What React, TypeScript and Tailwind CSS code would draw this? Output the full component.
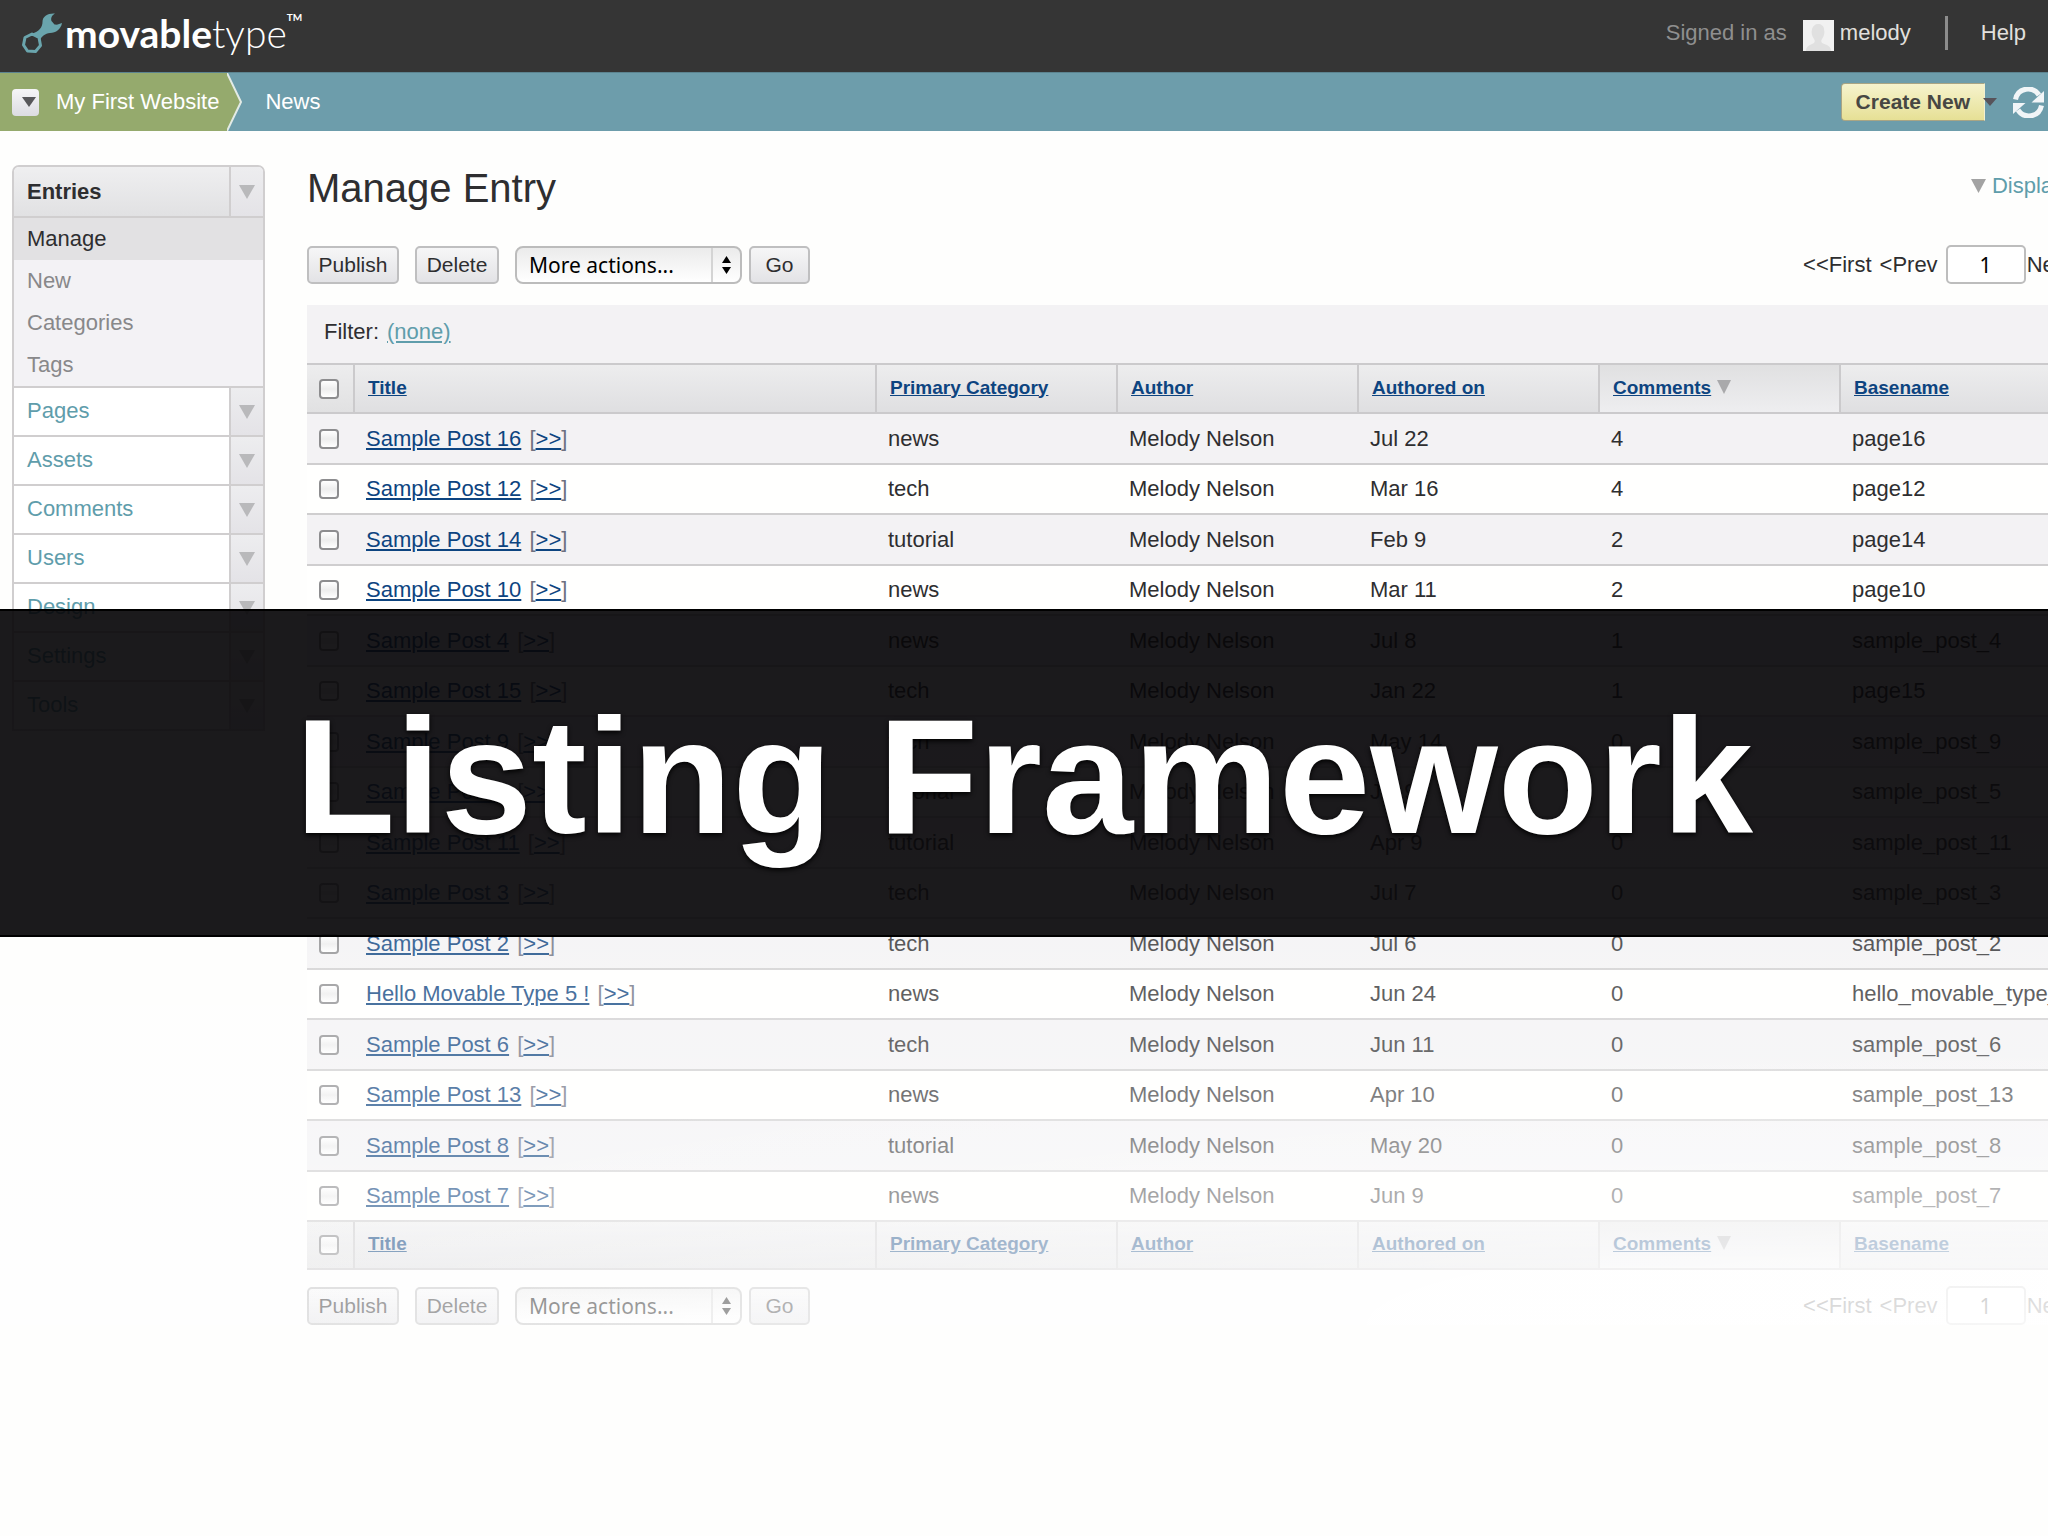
import clsx from 'clsx'

type Post = {
  title: string
  category: string
  date: string
  comments: number
  basename: string
}

const posts: Post[] = [
  { title: 'Sample Post 16', category: 'news', date: 'Jul 22', comments: 4, basename: 'page16' },
  { title: 'Sample Post 12', category: 'tech', date: 'Mar 16', comments: 4, basename: 'page12' },
  { title: 'Sample Post 14', category: 'tutorial', date: 'Feb 9', comments: 2, basename: 'page14' },
  { title: 'Sample Post 10', category: 'news', date: 'Mar 11', comments: 2, basename: 'page10' },
  { title: 'Sample Post 4', category: 'news', date: 'Jul 8', comments: 1, basename: 'sample_post_4' },
  { title: 'Sample Post 15', category: 'tech', date: 'Jan 22', comments: 1, basename: 'page15' },
  { title: 'Sample Post 9', category: 'tech', date: 'May 14', comments: 0, basename: 'sample_post_9' },
  { title: 'Sample Post 5', category: 'tutorial', date: 'Jul 9', comments: 0, basename: 'sample_post_5' },
  { title: 'Sample Post 11', category: 'tutorial', date: 'Apr 9', comments: 0, basename: 'sample_post_11' },
  { title: 'Sample Post 3', category: 'tech', date: 'Jul 7', comments: 0, basename: 'sample_post_3' },
  { title: 'Sample Post 2', category: 'tech', date: 'Jul 6', comments: 0, basename: 'sample_post_2' },
  { title: 'Hello Movable Type 5 !', category: 'news', date: 'Jun 24', comments: 0, basename: 'hello_movable_type_5' },
  { title: 'Sample Post 6', category: 'tech', date: 'Jun 11', comments: 0, basename: 'sample_post_6' },
  { title: 'Sample Post 13', category: 'news', date: 'Apr 10', comments: 0, basename: 'sample_post_13' },
  { title: 'Sample Post 8', category: 'tutorial', date: 'May 20', comments: 0, basename: 'sample_post_8' },
  { title: 'Sample Post 7', category: 'news', date: 'Jun 9', comments: 0, basename: 'sample_post_7' },
]

const columns = ['Title', 'Primary Category', 'Author', 'Authored on', 'Comments', 'Basename']
const entryLinks = ['Manage', 'New', 'Categories', 'Tags']
const menus = ['Pages', 'Assets', 'Comments', 'Users', 'Design', 'Settings', 'Tools']

export default function App() {
  return (
    <div className="relative min-h-screen overflow-hidden bg-[#fefefd] font-['Liberation_Sans',Arial,sans-serif] text-[22px] leading-7 text-[#2e2e30]">
      <TopBar />
      <Breadcrumbs />
      <div className="relative flex pl-3 pt-[34px]">
        <Sidebar />
        <main className="ml-[42px] -mr-28 min-w-0 flex-1">
          <div className="flex h-[46px] items-center justify-between pr-3.5">
            <h1 className="text-[40px] leading-[46px]">Manage Entry</h1>
            <a href="#display" className="flex items-center gap-1.5 pb-1 text-[#5f9dab]">
              <Triangle className="h-3.5 w-[15px] text-[#a3a3a3]" />
              Display Options
            </a>
          </div>
          <div className="mt-[34px]">
            <ActionBar id="top" />
          </div>
          <div className="mt-[21px] flex h-[58px] items-center gap-2 bg-[#f3f2f4] pb-1 pl-[17px]">
            Filter: <a href="#filter" className="text-[#5f9dab] underline">(none)</a>
          </div>
          <Listing />
          <div className="mt-4">
            <ActionBar id="bottom" />
          </div>
        </main>
        <div className="pointer-events-none absolute inset-x-0 bottom-0 h-[640px] bg-linear-to-b from-white/0 to-white/50" />
        <div className="pointer-events-none absolute inset-x-0 bottom-0 h-[640px] bg-[radial-gradient(ellipse_100%_45%_at_100%_100%,rgba(255,255,255,0.75),rgba(255,255,255,0))]" />
      </div>
      <div className="absolute inset-x-0 top-[609px] flex h-[328px] items-center justify-center border-y-2 border-black bg-[rgba(8,6,9,0.92)] pt-2">
        <h2 className="whitespace-nowrap text-[164px] font-bold leading-none text-white [text-shadow:0_2px_5px_#000]">
          Listing Framework
        </h2>
      </div>
    </div>
  )
}

function TopBar() {
  return (
    <header className="flex h-[72px] items-center bg-[#353535] px-[22px] pb-1.5">
      <a href="#home" className="flex items-center text-white">
        <Wrench />
        <span className="flex items-start pl-[3px] font-['Lato',sans-serif] text-[39px] leading-[44px]">
          <span className="font-bold">movable</span>
          <span className="font-light">type</span>
          <span className="text-[10px] font-bold leading-3">TM</span>
        </span>
      </a>
      <div className="ml-auto flex h-[34px] items-center text-[#e2e0dd]">
        <span className="text-[#8f8f8f]">Signed in as</span>
        <svg viewBox="0 0 31 31" className="ml-4 mr-1.5 mt-1 size-[31px]" aria-hidden="true">
          <rect width="31" height="31" fill="#f1f1f1" />
          <path d="M3 31c0-5 4-6 8-8 1-1 1-3 0-4-2-3-3-6-2-10 1-3 3-5 6-5s6 2 6 5c1 4 0 7-2 10-1 1-1 3 0 4 5 2 9 3 9 8z" fill="#e0e0e0" />
        </svg>
        <a href="#profile">melody</a>
        <span className="ml-[34px] mr-[33px] h-[34px] w-[3px] bg-[#8c8c8c]" />
        <a href="#help">Help</a>
      </div>
    </header>
  )
}

function Breadcrumbs() {
  return (
    <nav className="flex h-[59px] items-center border-t border-[#5c8490] bg-[#6d9dab] text-white">
      <div className="flex h-full items-center bg-[#95aa6d] pl-3">
        <button aria-label="Choose site" className="flex size-[27px] items-center justify-center rounded-[4px] bg-linear-to-b from-[#f5f5f7] to-[#dcdce2] pl-1.5">
          <Triangle className="h-2.5 w-3.5 text-[#57575a]" />
        </button>
        <a href="#site" className="ml-[17px] mr-2">My First Website</a>
      </div>
      <svg viewBox="0 0 16 58" className="h-full w-4" aria-hidden="true">
        <path d="M0 0L14 29 0 58z" fill="#95aa6d" />
        <path d="M0 0L14 29 0 58" fill="none" stroke="#e3ebe6" strokeWidth="2" />
      </svg>
      <a href="#news" className="ml-[22px]">News</a>
      <button className="ml-auto h-[38px] rounded-l-[4px] border border-[#a9a584] border-r-[#f3f0d0] bg-linear-to-b from-[#f6f3cd] to-[#e6e095] px-3.5 text-[21px] font-bold text-[#474743]">
        Create New
      </button>
      <Triangle className="-ml-0.5 h-2 w-3.5 text-[#57535a]" />
      <button aria-label="Rebuild" className="ml-4 mr-1">
        <Refresh />
      </button>
    </nav>
  )
}

function Sidebar() {
  return (
    <aside className="w-[253px] shrink-0 self-start overflow-hidden rounded-t-[7px] border-2 border-[#d0cecf] bg-white">
      <div className="flex h-[51px] border-b-2 border-[#d0cecf] bg-linear-to-b from-[#efeff0] to-[#e1e1e3]">
        <a href="#entries" className="flex flex-1 items-center pl-[13px] pt-px font-bold">Entries</a>
        <MenuToggle name="Entries" />
      </div>
      <ul className="bg-[#f3f2f5] text-[#88888a]">
        {entryLinks.map((name, i) => (
          <li key={name}>
            <a
              href="#entries"
              className={clsx('flex h-[42px] items-center pl-[13px]', i === 0 && 'bg-[#e2e1e3] text-[#2e2e30]')}
            >
              {name}
            </a>
          </li>
        ))}
      </ul>
      {menus.map(name => (
        <div key={name} className="flex h-[49px] border-t-2 border-[#d0cecf]">
          <a href="#menu" className="flex flex-1 items-center pb-0.5 pl-[13px] text-[#5f9dab]">{name}</a>
          <MenuToggle name={name} />
        </div>
      ))}
    </aside>
  )
}

function MenuToggle({ name }: { name: string }) {
  return (
    <button
      aria-label={`Toggle ${name}`}
      className="flex w-[34px] items-center justify-center border-l-2 border-[#d0cecf] bg-linear-to-b from-[#ededef] to-[#e4e3e7]"
    >
      <Triangle className="h-3.5 w-4 text-[#b9b9bb]" />
    </button>
  )
}

function ActionBar({ id }: { id: string }) {
  const button = 'h-[38px] rounded-[5px] border-2 border-[#bfbfc0] bg-linear-to-b from-[#f6f6f7] to-[#e3e3e6] text-[21px]'
  return (
    <div className="flex h-[39px] items-center">
      <button className={clsx(button, 'w-[92px]')}>Publish</button>
      <button className={clsx(button, 'ml-4 w-[84px]')}>Delete</button>
      <div className="relative ml-4">
        <select
          aria-label="More actions"
          className="block h-[38px] w-[227px] appearance-none rounded-[8px] border-2 border-[#bcbcbc] bg-linear-to-b from-[#ebebeb] to-white pl-3 font-['Noto_Sans',sans-serif] text-[21px] leading-7 text-black"
        >
          <option>More actions...</option>
        </select>
        <div className="pointer-events-none absolute inset-y-0.5 right-0.5 flex w-[29px] flex-col items-center justify-center gap-1 border-l-2 border-[#d4d4d4]">
          <Triangle className="h-[7px] w-[9px] rotate-180 text-black" />
          <Triangle className="h-[7px] w-[9px] text-black" />
        </div>
      </div>
      <button className={clsx(button, 'ml-[7px] w-[61px]')}>Go</button>
      <div className="ml-auto flex items-center whitespace-nowrap">
        <a href="#first">&lt;&lt;First</a>
        <a href="#prev" className="ml-2">&lt;Prev</a>
        <input
          type="text"
          aria-label="Page number"
          id={`page-${id}`}
          defaultValue="1"
          className="ml-2 mr-px h-[39px] w-20 rounded-[5px] border-2 border-[#bdbdbd] bg-white text-center font-['Noto_Sans',sans-serif] text-[21px] text-black"
        />
        <a href="#next">Next&gt;</a>
        <a href="#last" className="ml-2">Last&gt;&gt;</a>
      </div>
    </div>
  )
}

function Listing() {
  return (
    <table className="w-full table-fixed border-separate border-spacing-0 text-left">
      <colgroup>
        <col className="w-[46px]" />
        <col />
        <col className="w-[241px]" />
        <col className="w-[241px]" />
        <col className="w-[241px]" />
        <col className="w-[241px]" />
        <col className="w-[321px]" />
      </colgroup>
      <thead>
        <HeadingRow top />
      </thead>
      <tbody>
        {posts.map(post => (
          <tr
            key={post.basename}
            className="odd:h-[51px] odd:bg-[#f3f2f4] even:h-[50px] even:bg-[#fffffe] [&>td]:border-b-2 [&>td]:border-[#cfcecf] [&>td]:pl-[13px]"
          >
            <td className="pl-3!"><Checkbox label={`Select ${post.title}`} /></td>
            <td className="text-[#6d7080]">
              <a href="#edit" className="mr-0.5 text-[#0d4480] underline">{post.title}</a>{' '}
              [<a href="#view" className="text-[#0d4480] underline">&gt;&gt;</a>]
            </td>
            <td>{post.category}</td>
            <td>Melody Nelson</td>
            <td>{post.date}</td>
            <td>{post.comments}</td>
            <td>{post.basename}</td>
          </tr>
        ))}
      </tbody>
      <tfoot>
        <HeadingRow />
      </tfoot>
    </table>
  )
}

function HeadingRow({ top = false }: { top?: boolean }) {
  return (
    <tr className={clsx('[&>th]:border-b-2 [&>th]:border-[#cbcacc]', top ? 'h-[51px] [&>th]:border-t-2' : 'h-12')}>
      <th className="bg-linear-to-b from-[#ededee] to-[#e1e1e2] pl-3">
        <Checkbox label="Select all" />
      </th>
      {columns.map(name => (
        <th
          key={name}
          className={clsx(
            'border-l-2 bg-linear-to-b pb-0.5 pl-[13px] text-[19px] leading-6',
            name === 'Comments' ? 'from-[#e0e0e1] to-[#eeeef0]' : 'from-[#ededee] to-[#dfdfe1]',
          )}
        >
          <a href="#sort" className="text-[#0d4480] underline">{name}</a>
          {name === 'Comments' && <Triangle className="ml-1.5 inline h-3.5 w-3.5 align-baseline text-[#a9a9ab]" />}
        </th>
      ))}
    </tr>
  )
}

function Checkbox({ label }: { label: string }) {
  return (
    <input
      type="checkbox"
      aria-label={label}
      className="block size-5 appearance-none rounded-[4px] border-2 border-[#8d8d8f] bg-linear-to-b from-white via-[#ededed] to-white"
    />
  )
}

function Triangle({ className }: { className?: string }) {
  return (
    <svg viewBox="0 0 16 14" preserveAspectRatio="none" className={className} aria-hidden="true">
      <path d="M0 0h16L8 14z" fill="currentColor" />
    </svg>
  )
}

function Wrench() {
  return (
    <svg viewBox="0 0 40 40" className="size-10" aria-hidden="true">
      <path d="M10 21l7 3.500 1.500 8-5 6-8-.5L1.500 32l1.500-7.500z" fill="none" stroke="#6aa5ad" strokeWidth="3" strokeLinejoin="round" />
      <path
        d="M10 20.500C17 19 20.500 14 20.500 9 20.500 3 26 0 33 .5 30 2 28.500 5 29.500 8l3 3.500c3 .5 5-.5 7.500-1.500-1 6-6 10-12 10-5 .5-8 3-10 7z"
        fill="#6aa5ad"
      />
    </svg>
  )
}

function Refresh() {
  return (
    <svg viewBox="0 0 31 31" className="size-[31px]" aria-hidden="true">
      <path d="M2.500 12.500C5 0 20-1 26 8" fill="none" stroke="#f1f5f7" strokeWidth="5" />
      <path d="M31 4v11.500H18.500z" fill="#f1f5f7" />
      <path d="M28.500 18.500C26 31 11 32 5 23" fill="none" stroke="#f1f5f7" strokeWidth="5" />
      <path d="M0 27V16h12.500z" fill="#f1f5f7" />
    </svg>
  )
}
